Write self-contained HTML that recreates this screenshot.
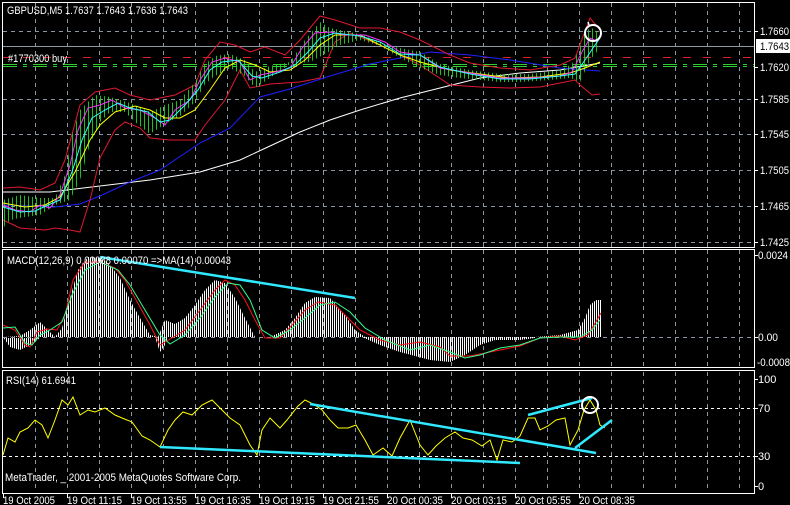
<!DOCTYPE html>
<html><head><meta charset="utf-8"><style>
html,body{margin:0;padding:0;background:#000;width:790px;height:505px;overflow:hidden}
svg{display:block}
text{font-family:"Liberation Sans",sans-serif;font-size:11px;fill:#fff}
.ax{font-size:11px}
</style></head><body>
<svg width="790" height="505" viewBox="0 0 790 505" xmlns="http://www.w3.org/2000/svg">
<defs>
<pattern id="st" width="2" height="10" patternUnits="userSpaceOnUse"><rect x="0" y="0" width="1" height="10" fill="#fff"/></pattern>
<pattern id="bars" width="4" height="10" patternUnits="userSpaceOnUse"><rect x="0" y="0" width="1" height="10" fill="#22e022"/></pattern>
</defs>
<rect width="790" height="505" fill="#000"/>
<g stroke="#8a96a2" stroke-width="1" stroke-dasharray="4,4">
<path d="M35.5 3V247M67.5 3V247M99.5 3V247M131.5 3V247M163.5 3V247M195.5 3V247M227.5 3V247M259.5 3V247M291.5 3V247M323.5 3V247M355.5 3V247M387.5 3V247M419.5 3V247M451.5 3V247M483.5 3V247M515.5 3V247M547.5 3V247M579.5 3V247M611.5 3V247M643.5 3V247M675.5 3V247M707.5 3V247M739.5 3V247"/>
<path d="M35.5 250V367M67.5 250V367M99.5 250V367M131.5 250V367M163.5 250V367M195.5 250V367M227.5 250V367M259.5 250V367M291.5 250V367M323.5 250V367M355.5 250V367M387.5 250V367M419.5 250V367M451.5 250V367M483.5 250V367M515.5 250V367M547.5 250V367M579.5 250V367M611.5 250V367M643.5 250V367M675.5 250V367M707.5 250V367M739.5 250V367"/>
<path d="M35.5 372V492M67.5 372V492M99.5 372V492M131.5 372V492M163.5 372V492M195.5 372V492M227.5 372V492M259.5 372V492M291.5 372V492M323.5 372V492M355.5 372V492M387.5 372V492M419.5 372V492M451.5 372V492M483.5 372V492M515.5 372V492M547.5 372V492M579.5 372V492M611.5 372V492M643.5 372V492M675.5 372V492M707.5 372V492M739.5 372V492"/>
<path d="M3 31.5H754M3 99.5H754M3 134.5H754M3 170.5H754M3 206.5H754M3 242.5H754M3 337.5H754"/>
</g>
<g stroke="#fff" stroke-width="1" stroke-dasharray="3,3"><path d="M3 408.5H754M3 456.5H754"/></g>
<path d="M3 46.5H754" stroke="#8a96a2"/>
<path d="M3 57.5H754" stroke="#e02020" stroke-dasharray="8,12"/>
<path d="M3 64.5H754M3 66.5H754" stroke="#30d030" stroke-dasharray="14,6,4,6"/>
<polyline fill="none" stroke="#fff" points="3,192 50,192 100,186 150,180 200,172 240,160 270,146 300,132 330,120 360,110 400,98 440,88 480,78 520,73 560,70 600,63"/>
<polyline fill="none" stroke="#2020ff" points="3,205 55,207 80,204 100,196 130,182 160,170 200,143 230,128 260,97 290,89 330,76 370,64 400,58 430,52 470,55 510,60 560,68 600,71"/>
<polyline fill="none" stroke="#e01830" points="3,188 20,187 40,190 55,183 65,160 80,105 95,92 115,88 130,95 150,100 175,95 195,85 205,60 220,42 235,45 250,52 265,47 285,55 300,40 320,16 335,20 360,28 380,28 400,32 420,40 450,55 470,63 500,68 530,70 560,65 575,58 590,18 600,30"/>
<polyline fill="none" stroke="#e01830" points="3,220 20,228 45,230 55,228 70,230 80,232 90,200 100,158 115,130 125,122 140,128 150,138 170,140 195,140 205,125 225,100 240,70 250,88 270,84 300,82 320,78 335,42 350,33 380,45 420,65 450,85 480,87 510,88 540,87 560,83 575,80 580,85 592,95 600,94"/>
<polygon fill="url(#bars)" opacity="0.85" points="3,200 20,195 40,198 55,198 65,175 72,135 80,110 95,95 110,97 130,103 150,112 165,105 180,100 195,82 205,64 215,56 230,54 245,60 255,72 270,66 290,62 305,40 320,22 330,28 360,34 390,46 420,52 440,64 470,70 500,74 530,74 560,70 572,64 580,48 585,30 595,28 600,40 600,48 590,60 580,82 570,78 550,80 520,82 500,82 480,80 460,78 440,75 420,68 400,58 380,46 360,40 340,45 325,54 310,62 290,64 270,78 255,88 245,76 230,68 215,76 205,84 195,102 180,116 165,124 150,134 135,122 125,112 110,112 100,122 90,144 80,180 70,200 55,205 40,215 25,217 10,220 3,228"/>
<polyline fill="none" stroke="#ffff00" points="3,203 25,207 45,205 60,197 75,172 90,140 100,125 115,112 135,106 150,110 165,118 180,118 195,110 210,90 225,68 240,60 255,65 270,72 290,70 305,60 320,45 335,35 360,35 380,45 400,55 420,62 450,70 480,74 510,78 540,77 570,73 585,68 600,62"/>
<polyline fill="none" stroke="#ff30ff" points="3,205 15,210 30,212 40,205 50,208 60,195 70,165 78,130 88,108 100,105 112,100 125,108 140,110 155,118 165,125 175,110 190,100 200,80 212,62 225,58 240,62 250,80 260,75 275,72 290,68 302,48 315,33 330,32 345,35 365,35 385,42 400,52 420,55 440,68 470,73 500,78 530,78 560,76 572,72 582,52 590,38 598,42"/>
<polyline fill="none" stroke="#30ffff" points="3,207 20,212 35,211 48,205 60,200 72,172 82,140 92,118 105,110 118,103 130,108 148,112 160,122 170,120 185,105 198,90 210,70 222,62 238,60 252,76 262,78 280,72 295,65 308,52 320,38 335,33 360,36 380,42 400,54 420,55 440,67 470,74 500,79 530,79 560,76 575,74 585,60 595,45 600,38"/>
<circle cx="593" cy="33" r="8" fill="none" stroke="#fff" stroke-width="2"/>
<path d="M588 22l1 3" stroke="#fff" stroke-width="1.5"/>
<text x="7" y="14" textLength="181" lengthAdjust="spacingAndGlyphs">GBPUSD,M5  1.7637 1.7643 1.7636 1.7643</text>
<text x="8" y="62" textLength="59" lengthAdjust="spacingAndGlyphs">#1770300 buy</text>
<polygon fill="url(#st)" points="3,337 20,336 30,330 40,322 48,330 55,337 62,328 70,298 78,270 88,257 100,258 110,265 120,278 130,300 140,318 150,335 158,337 165,320 175,324 185,318 195,305 205,290 215,280 225,283 235,298 245,318 255,337 265,337 270,337 285,330 295,318 305,303 315,297 330,298 345,315 355,330 365,337 3,337"/>
<polygon fill="url(#st)" points="3,337 10,347 20,350 30,345 40,338 3,338"/>
<polygon fill="url(#st)" points="155,337 160,352 165,345 168,337"/>
<polygon fill="url(#st)" points="362,337 380,345 400,352 415,356 430,360 450,362 465,355 480,345 495,340 520,340 535,338 535,337 362,337"/>
<polygon fill="url(#st)" points="535,337 560,335 578,330 585,318 590,305 596,300 602,300 602,337"/>
<polyline fill="none" stroke="#ff1010" points="3,325 15,330 25,345 30,347 37,332 47,329 57,330 65,315 73,280 85,262 100,262 115,268 125,280 135,298 150,325 160,345 172,338 185,330 200,310 215,290 225,280 235,285 245,300 255,320 265,338 280,338 292,325 305,310 318,302 335,305 345,315 360,330 380,340 400,345 420,342 440,347 450,356 470,356 490,352 520,346 540,338 560,336 575,340 588,335 597,320 601,313"/>
<polyline fill="none" stroke="#30ff90" points="3,328 15,327 25,343 32,345 40,335 50,330 62,322 72,295 85,270 100,262 118,270 130,285 145,310 160,335 170,344 185,335 200,318 215,297 228,283 240,285 250,300 262,330 275,338 290,330 305,318 320,305 335,302 350,312 365,328 385,340 410,350 430,345 450,352 465,358 480,355 500,348 520,345 540,338 560,337 580,337 592,330 600,320"/>
<line x1="100" y1="257" x2="355" y2="298" stroke="#30e8ff" stroke-width="2.5"/>
<text x="7" y="264" textLength="224" lengthAdjust="spacingAndGlyphs">MACD(12,26,9) 0.00088 0.00070  =&gt;MA(14) 0.00043</text>
<polyline fill="none" stroke="#ffff00" points="3,455 8,438 15,442 20,432 28,428 35,420 42,425 48,438 55,420 62,400 68,405 73,397 80,415 88,410 95,412 105,408 115,415 122,418 132,422 142,436 150,440 160,447 168,430 175,420 183,412 192,415 202,405 212,400 222,410 230,418 240,425 250,445 257,455 262,430 270,418 280,428 287,420 298,406 305,400 315,405 322,410 330,420 338,428 348,428 356,425 365,440 373,455 383,448 392,456 400,438 410,420 420,445 428,455 436,446 445,438 455,432 463,438 472,440 482,446 490,440 497,460 503,440 512,442 520,436 528,418 535,418 540,430 548,426 556,420 565,418 570,445 578,430 584,410 590,400 596,410 600,425 605,428"/>
<g stroke="#30e8ff" stroke-width="2.5" fill="none">
<line x1="160" y1="447" x2="520" y2="463"/>
<line x1="310" y1="404" x2="596" y2="453"/>
<line x1="528" y1="415" x2="592" y2="398"/>
<line x1="575" y1="448" x2="612" y2="420"/>
</g>
<circle cx="590" cy="405" r="8" fill="none" stroke="#fff" stroke-width="2"/>
<text x="6" y="384" textLength="70" lengthAdjust="spacingAndGlyphs">RSI(14) 61.6941</text>
<text x="5" y="481" textLength="236" lengthAdjust="spacingAndGlyphs">MetaTrader, _ 2001-2005 MetaQuotes Software Corp.</text>
<g fill="none" stroke="#fff" stroke-width="1">
<rect x="2.5" y="2.5" width="752" height="245"/>
<rect x="2.5" y="249.5" width="752" height="118"/>
<rect x="2.5" y="370.5" width="752" height="123"/>
</g>
<g stroke="#fff"><path d="M755 31.5h3M755 67.5h3M755 99.5h3M755 134.5h3M755 170.5h3M755 206.5h3M755 242.5h3M755 255.5h3M755 337.5h3M755 379.5h3M755 408.5h3M755 456.5h3M755 486.5h3"/>
<path d="M3.5 494v4M67.5 494v4M131.5 494v4M195.5 494v4M259.5 494v4M323.5 494v4M387.5 494v4M451.5 494v4M515.5 494v4M579.5 494v4"/></g>
<g>
<text class="ax" x="760" y="35" textLength="29" lengthAdjust="spacingAndGlyphs">1.7660</text>
<rect x="756" y="39" width="34" height="14" fill="#fff"/>
<text class="ax" x="760" y="50" textLength="29" lengthAdjust="spacingAndGlyphs" style="fill:#000">1.7643</text>
<text class="ax" x="760" y="71" textLength="29" lengthAdjust="spacingAndGlyphs">1.7620</text>
<text class="ax" x="760" y="103" textLength="29" lengthAdjust="spacingAndGlyphs">1.7585</text>
<text class="ax" x="760" y="138" textLength="29" lengthAdjust="spacingAndGlyphs">1.7545</text>
<text class="ax" x="760" y="174" textLength="29" lengthAdjust="spacingAndGlyphs">1.7505</text>
<text class="ax" x="760" y="210" textLength="29" lengthAdjust="spacingAndGlyphs">1.7465</text>
<text class="ax" x="760" y="246" textLength="29" lengthAdjust="spacingAndGlyphs">1.7425</text>
<text class="ax" x="758" y="259" textLength="30" lengthAdjust="spacingAndGlyphs">0.0024</text>
<text class="ax" x="758" y="341" textLength="20" lengthAdjust="spacingAndGlyphs">0.00</text>
<text class="ax" x="757" y="366" textLength="33" lengthAdjust="spacingAndGlyphs">-0.0008</text>
<text class="ax" x="758" y="383">100</text>
<text class="ax" x="758" y="412">70</text>
<text class="ax" x="758" y="460">30</text>
<text class="ax" x="758" y="490">0</text>
</g>
<g>
<text class="ax" x="3" y="504" textLength="52" lengthAdjust="spacingAndGlyphs">19 Oct 2005</text>
<text class="ax" x="67" y="504" textLength="55" lengthAdjust="spacingAndGlyphs">19 Oct 11:15</text>
<text class="ax" x="131" y="504" textLength="56" lengthAdjust="spacingAndGlyphs">19 Oct 13:55</text>
<text class="ax" x="195" y="504" textLength="56" lengthAdjust="spacingAndGlyphs">19 Oct 16:35</text>
<text class="ax" x="259" y="504" textLength="56" lengthAdjust="spacingAndGlyphs">19 Oct 19:15</text>
<text class="ax" x="323" y="504" textLength="56" lengthAdjust="spacingAndGlyphs">19 Oct 21:55</text>
<text class="ax" x="387" y="504" textLength="56" lengthAdjust="spacingAndGlyphs">20 Oct 00:35</text>
<text class="ax" x="451" y="504" textLength="56" lengthAdjust="spacingAndGlyphs">20 Oct 03:15</text>
<text class="ax" x="515" y="504" textLength="56" lengthAdjust="spacingAndGlyphs">20 Oct 05:55</text>
<text class="ax" x="579" y="504" textLength="56" lengthAdjust="spacingAndGlyphs">20 Oct 08:35</text>
</g>
</svg>
</body></html>
